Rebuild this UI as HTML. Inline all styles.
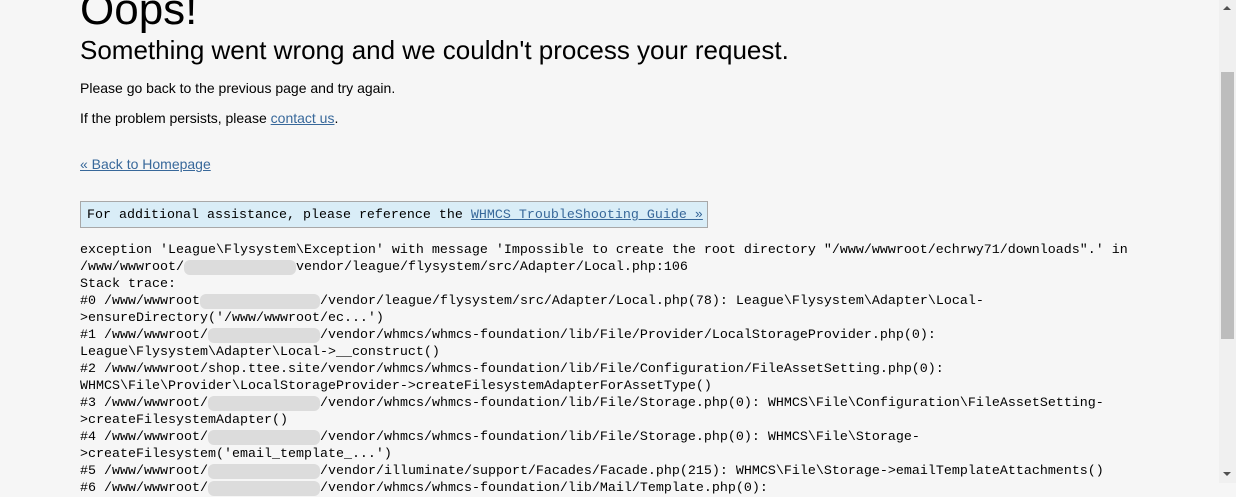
<!DOCTYPE html>
<html><head><style>
html,body{margin:0;padding:0;}
body{width:1236px;height:483px;overflow:hidden;background:#f6f6f6;font-family:"Liberation Sans",Arial,sans-serif;color:#000;position:relative;}
.c{position:absolute;left:80px;}
a{color:#38689a;text-decoration:underline;}
.mono{font-family:"Liberation Mono","Courier New",monospace;font-size:13.33px;line-height:17px;}
.mono div{height:17px;white-space:pre;}
.blur{display:inline-block;background:#dcdcdc;border-radius:6px;height:15px;vertical-align:top;margin-top:1px;}
.sb{position:absolute;right:0;top:0;width:17px;height:483px;background:#f0f0f0;}
.th{position:absolute;left:2px;top:72px;width:13px;height:267px;background:#bdbdbd;}
</style></head><body>
<div class="c" style="top:-15px;font-size:44px;line-height:50px;">Oops!</div>
<div class="c" style="top:34px;font-size:26px;line-height:32px;">Something went wrong and we couldn't process your request.</div>
<div class="c" style="top:80px;font-size:14px;">Please go back to the previous page and try again.</div>
<div class="c" style="top:110px;font-size:14px;">If the problem persists, please <a>contact us</a>.</div>
<div class="c" style="top:156px;font-size:14px;"><a>« Back to Homepage</a></div>
<div class="c mono" style="top:201px;width:620px;height:25px;line-height:27px;padding-left:6px;background:#d9edf7;border:1px solid #a8a8a8;white-space:nowrap;">For additional assistance, please reference the <a>WHMCS TroubleShooting Guide »</a></div>
<div class="c mono" style="top:242px;">
<div>exception 'League\Flysystem\Exception' with message 'Impossible to create the root directory "/www/wwwroot/echrwy71/downloads".' in</div>
<div>/www/wwwroot/<span class="blur" style="width:112px"></span>vendor/league/flysystem/src/Adapter/Local.php:106</div>
<div>Stack trace:</div>
<div>#0 /www/wwwroot<span class="blur" style="width:120px"></span>/vendor/league/flysystem/src/Adapter/Local.php(78): League\Flysystem\Adapter\Local-</div>
<div>&gt;ensureDirectory('/www/wwwroot/ec...')</div>
<div>#1 /www/wwwroot/<span class="blur" style="width:112px"></span>/vendor/whmcs/whmcs-foundation/lib/File/Provider/LocalStorageProvider.php(0):</div>
<div>League\Flysystem\Adapter\Local-&gt;__construct()</div>
<div>#2 /www/wwwroot/shop.ttee.site/vendor/whmcs/whmcs-foundation/lib/File/Configuration/FileAssetSetting.php(0):</div>
<div>WHMCS\File\Provider\LocalStorageProvider-&gt;createFilesystemAdapterForAssetType()</div>
<div>#3 /www/wwwroot/<span class="blur" style="width:112px"></span>/vendor/whmcs/whmcs-foundation/lib/File/Storage.php(0): WHMCS\File\Configuration\FileAssetSetting-</div>
<div>&gt;createFilesystemAdapter()</div>
<div>#4 /www/wwwroot/<span class="blur" style="width:112px"></span>/vendor/whmcs/whmcs-foundation/lib/File/Storage.php(0): WHMCS\File\Storage-</div>
<div>&gt;createFilesystem('email_template_...')</div>
<div>#5 /www/wwwroot/<span class="blur" style="width:112px"></span>/vendor/illuminate/support/Facades/Facade.php(215): WHMCS\File\Storage-&gt;emailTemplateAttachments()</div>
<div>#6 /www/wwwroot/<span class="blur" style="width:112px"></span>/vendor/whmcs/whmcs-foundation/lib/Mail/Template.php(0):</div>
</div>
<div class="sb"><div class="th"></div>
<div style="position:absolute;left:4px;top:6px;width:0;height:0;border-left:4px solid transparent;border-right:4px solid transparent;border-bottom:4px solid #505050;"></div>
<div style="position:absolute;left:4px;top:472px;width:0;height:0;border-left:4px solid transparent;border-right:4px solid transparent;border-top:4px solid #505050;"></div>
</div>
</body></html>
